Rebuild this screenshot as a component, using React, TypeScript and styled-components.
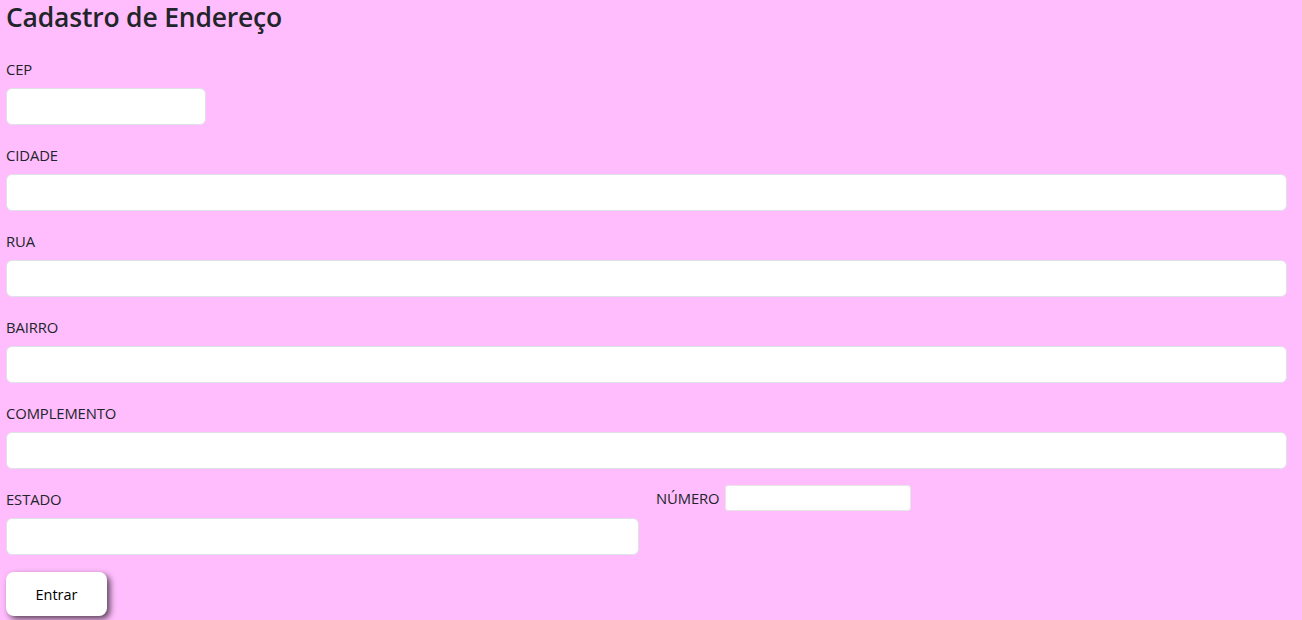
import React from "react";
import styled, { createGlobalStyle } from "styled-components";

const Global = createGlobalStyle`
  html, body { margin: 0; padding: 0; background: #ffbdfd; }
  body { font-family: "Open Sans", "Noto Sans", sans-serif; color: #212529; }
  * { box-sizing: border-box; }
`;

const Page = styled.div`
  padding: 0 15px 0 6px;
  min-height: 620px;
`;

const Title = styled.h1`
  margin: 0;
  padding-top: 1px;
  font-size: 26.5px;
  font-weight: 600;
  line-height: 32px;
  letter-spacing: -0.2px;
`;

const Form = styled.form`
  display: flex;
  flex-direction: column;
  padding-top: 26px;
`;

const Group = styled.div`
  display: flex;
  flex-direction: column;
  gap: 8px;
  margin-bottom: 20px;
`;

const Label = styled.label`
  font-size: 14.8px;
  line-height: 21px;
  letter-spacing: -0.1px;
`;

const Input = styled.input<{ $w?: string }>`
  width: ${(p) => p.$w ?? "100%"};
  height: 37px;
  border: 1px solid #dee2e6;
  border-radius: 6px;
  background: #fff;
  padding: 6px 12px;
  font: inherit;
  outline: none;
`;

const Row = styled.div`
  display: flex;
  align-items: flex-start;
  gap: 17px;
`;

const Half = styled.div`
  width: 633px;
`;

const Inline = styled.div`
  display: flex;
  align-items: center;
  gap: 5px;
  margin-top: -4px;
`;

const SmallInput = styled.input`
  width: 186px;
  height: 26px;
  border: 1px solid #e6e6e6;
  border-radius: 3px;
  background: #fff;
  outline: none;
`;

const Button = styled.button`
  width: 101px;
  height: 44px;
  margin-top: -3px;
  border: none;
  border-radius: 8px;
  background: #fff;
  color: #000;
  font-family: "Open Sans", sans-serif;
  font-size: 14.5px;
  box-shadow: 3px 3px 6px rgba(0, 0, 0, 0.65);
  cursor: pointer;
`;

const fields = ["CIDADE", "RUA", "BAIRRO", "COMPLEMENTO"];

export default function App() {
  return (
    <Page>
      <Global />
      <Title>Cadastro de Endereço</Title>
      <Form onSubmit={(e) => e.preventDefault()}>
        <Group>
          <Label>CEP</Label>
          <Input $w="200px" />
        </Group>
        {fields.map((f) => (
          <Group key={f}>
            <Label>{f}</Label>
            <Input />
          </Group>
        ))}
        <Row>
          <Half>
            <Group>
              <Label>ESTADO</Label>
              <Input />
            </Group>
          </Half>
          <Inline>
            <Label>NÚMERO</Label>
            <SmallInput />
          </Inline>
        </Row>
        <div>
          <Button type="submit">Entrar</Button>
        </div>
      </Form>
    </Page>
  );
}
